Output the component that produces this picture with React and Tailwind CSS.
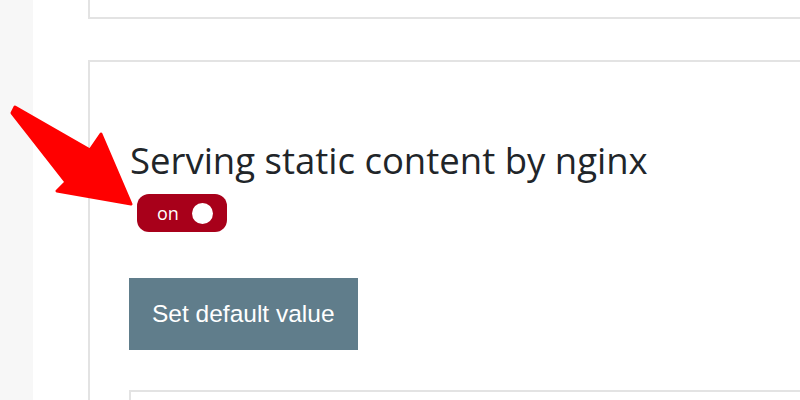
export default function App() {
  return (
    <div className="relative flex h-[400px] w-[800px] overflow-hidden bg-white">
      <div className="w-[33px] shrink-0 bg-[#f7f7f7]" />
      <div className="flex flex-1 flex-col pl-[55px]">
        <div className="h-[19px] shrink-0 border-b-2 border-l-2 border-[#e3e3e3]" />
        <div className="mt-[41px] flex-1 border-l-2 border-t-2 border-[#e3e3e3] pl-[39px] pt-[74px]">
          <h1 className="pl-[1px] font-['Open_Sans',sans-serif] text-[36.5px] leading-[48px] text-[#212529]">
            Serving static content by nginx
          </h1>
          <div className="ml-[8px] mt-[10px] flex h-[38px] w-[90px] items-center rounded-[12px] bg-[#a8001a] pl-[20px]">
            <span className="font-['Open_Sans',sans-serif] text-[18px] leading-none text-white">on</span>
            <span className="ml-[13px] h-[21px] w-[21px] rounded-full bg-white" />
          </div>
          <button className="mt-[46px] flex h-[72px] w-[229px] items-center bg-[#607d8b] pl-[23px] font-['Liberation_Sans',Arial,sans-serif] text-[24.5px] text-white">
            Set default value
          </button>
          <div className="mt-[40px] h-[40px] border-l-2 border-t-2 border-[#e3e3e3]" />
        </div>
      </div>
      <svg className="absolute left-0 top-0" width="800" height="400" viewBox="0 0 800 400">
        <polygon
          points="15,107 90,150 101,134 131,204 57,191 66,182 12,113"
          fill="#ff0000"
          stroke="#ff0000"
          strokeWidth="3"
          strokeLinejoin="round"
        />
      </svg>
    </div>
  );
}
